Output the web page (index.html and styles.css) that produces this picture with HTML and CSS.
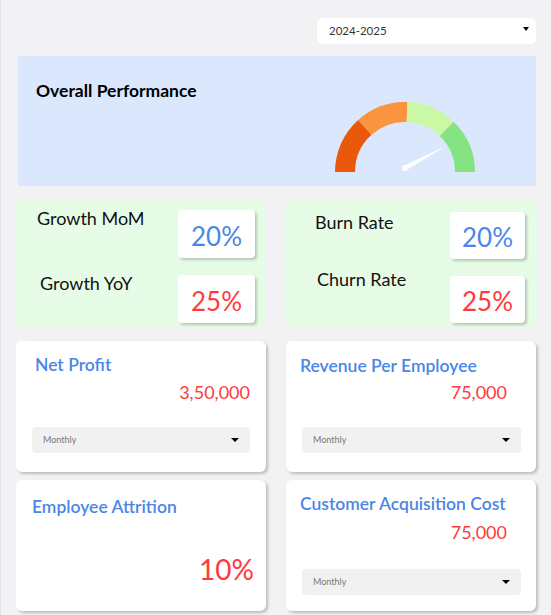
FILE: index.html
```html
<!DOCTYPE html>
<html lang="en">
<head>
<meta charset="utf-8">
<title>Dashboard</title>
<link rel="stylesheet" href="styles.css">
</head>
<body>
<div class="page">
  <div class="topbar">
    <div class="year-select">
      <span>2024-2025</span>
      <span class="caret caret-top"></span>
    </div>
  </div>

  <section class="overall">
    <h2 class="overall-title">Overall Performance</h2>
    <svg class="gauge" width="140" height="72" viewBox="0 0 140 72">
      <path d="M10 70 A60 60 0 0 1 29.85 25.41" stroke="#ea580c" stroke-width="20" fill="none"/>
      <path d="M29.85 25.41 A60 60 0 0 1 72.09 10.04" stroke="#fb943e" stroke-width="20" fill="none"/>
      <path d="M72.09 10.04 A60 60 0 0 1 111.68 26.84" stroke="#c9f9a5" stroke-width="20" fill="none"/>
      <path d="M111.68 26.84 A60 60 0 0 1 130 70" stroke="#86e382" stroke-width="20" fill="none"/>
      <polygon points="71.2,68.2 68.8,63.8 111,44" fill="#ffffff"/>
      <circle cx="70" cy="66" r="3" fill="#ffffff"/>
    </svg>
  </section>

  <div class="stats">
    <section class="stat-panel stat-left">
      <div class="stat-label lbl-mom">Growth MoM</div>
      <div class="stat-box blue">20%</div>
      <div class="stat-label lbl-yoy">Growth YoY</div>
      <div class="stat-box red">25%</div>
    </section>
    <section class="stat-panel stat-right">
      <div class="stat-label lbl-burn">Burn Rate</div>
      <div class="stat-box blue">20%</div>
      <div class="stat-label lbl-churn">Churn Rate</div>
      <div class="stat-box red">25%</div>
    </section>
  </div>

  <div class="cards">
    <section class="card card-profit">
      <h3 class="card-title">Net Profit</h3>
      <div class="card-value">3,50,000</div>
      <div class="period-select"><span>Monthly</span><span class="caret"></span></div>
    </section>
    <section class="card card-revenue">
      <h3 class="card-title">Revenue Per Employee</h3>
      <div class="card-value">75,000</div>
      <div class="period-select"><span>Monthly</span><span class="caret"></span></div>
    </section>
    <section class="card card-attrition">
      <h3 class="card-title">Employee Attrition</h3>
      <div class="card-value big">10%</div>
    </section>
    <section class="card card-cac">
      <h3 class="card-title">Customer Acquisition Cost</h3>
      <div class="card-value">75,000</div>
      <div class="period-select"><span>Monthly</span><span class="caret"></span></div>
    </section>
  </div>
</div>
</body>
</html>
```

FILE: styles.css
```css
* { box-sizing: border-box; }

html, body {
  margin: 0;
  padding: 0;
}

body {
  background: #f2f2f4;
  border-left: 1px solid #dfe3ee;
  font-family: Lato, "Open Sans", sans-serif;
  color: #111;
  width: 551px;
  height: 615px;
  overflow: hidden;
}

.page {
  padding: 18px 13px 0 14px;
}

/* top year select */
.topbar {
  display: flex;
  justify-content: flex-end;
  padding-right: 2px;
}

.year-select {
  width: 219px;
  height: 26px;
  background: #fff;
  border-radius: 5px;
  display: flex;
  align-items: center;
  justify-content: space-between;
  padding: 0 7px 1px 12px;
  font-size: 11.5px;
  color: #3a3535;
}

.caret {
  width: 0;
  height: 0;
  border-left: 3.5px solid transparent;
  border-right: 3.5px solid transparent;
  border-top: 4px solid #000;
}

.caret-top {
  margin-top: -4px;
}

/* overall performance */
.overall {
  margin: 12px 2px 0 3px;
  height: 130px;
  background: #dbe7fd;
  display: flex;
  justify-content: space-between;
  align-items: flex-start;
  padding: 0 61px 0 18px;
}

.overall-title {
  margin: 24px 0 0 0;
  font-size: 17.5px;
  font-weight: 700;
  line-height: 1.2;
  color: #000;
}

.gauge {
  display: block;
  margin-top: 46px;
}

/* stats panels */
.stats {
  display: grid;
  grid-template-columns: 250px 253px;
  column-gap: 20px;
  margin-top: 13px;
}

.stat-panel {
  background: #e7fce7;
  height: 129px;
  display: grid;
  grid-template-columns: 1fr 77px;
  row-gap: 17px;
  align-items: start;
  align-content: start;
  padding: 11px 10px 0 0;
}

.stat-right {
  grid-template-columns: 1fr 75px;
  padding: 13px 13px 0 0;
}

.stat-label {
  font-size: 18px;
  line-height: 1.2;
  color: #111;
}

.lbl-mom { padding-left: 22px; margin-top: -2px; }
.lbl-yoy { padding-left: 25px; margin-top: -2px; }
.lbl-burn { padding-left: 30px; margin-top: 0; }
.lbl-churn { padding-left: 32px; margin-top: -7px; }

.stat-box {
  height: 48px;
  background: #fff;
  border-radius: 4px;
  box-shadow: 2px 2px 3px rgba(0, 0, 0, 0.22);
  display: flex;
  align-items: center;
  justify-content: center;
  font-size: 26px;
  padding-top: 3px;
}

.stat-right .stat-box { height: 47px; }

.blue { color: #4a86e8; }
.red { color: #ff3a3a; }

/* cards */
.cards {
  display: grid;
  grid-template-columns: 250px 250px;
  column-gap: 20px;
  row-gap: 8px;
  margin: 13px 0 0 1px;
}

.card {
  height: 131px;
  background: #fff;
  border-radius: 6px;
  box-shadow: 2px 2px 3px rgba(0, 0, 0, 0.22);
  display: flex;
  flex-direction: column;
  padding: 0 16px;
}

.card-title {
  margin: 0;
  font-size: 17.5px;
  font-weight: 600;
  line-height: 1.2;
  color: #4a86e8;
}

.card-value {
  text-align: right;
  font-size: 18px;
  line-height: 1.2;
  color: #ff3a3a;
}

.card-value.big {
  font-size: 28px;
}

.period-select {
  height: 26px;
  background: #f1f1f1;
  border-radius: 4px;
  display: flex;
  align-items: center;
  justify-content: space-between;
  padding: 0 11px 0 11px;
  font-size: 9px;
  color: #777;
}

.period-select .caret {
  border-left-width: 4px;
  border-right-width: 4px;
  border-top-width: 4.5px;
}

.card-profit .card-title { padding: 13px 0 0 3px; }
.card-profit .card-value { margin-top: 7px; }
.card-profit .period-select { margin-top: 23px; }

.card-revenue { padding: 0 15px 0 16px; }
.card-revenue .card-title { padding: 14px 0 0 0; margin-left: -2px; }
.card-revenue .card-value { margin-top: 6px; padding-right: 14px; }
.card-revenue .period-select { margin-top: 23px; }

.card-attrition .card-title { padding: 16px 0 0 0; }
.card-attrition .card-value { margin-top: 36px; margin-right: -4px; }

.card-cac { padding: 0 15px 0 16px; }
.card-cac .card-title { padding: 13px 0 0 0; margin-left: -2px; }
.card-cac .card-value { margin-top: 8px; padding-right: 14px; }
.card-cac .period-select { margin-top: 25px; }
```
